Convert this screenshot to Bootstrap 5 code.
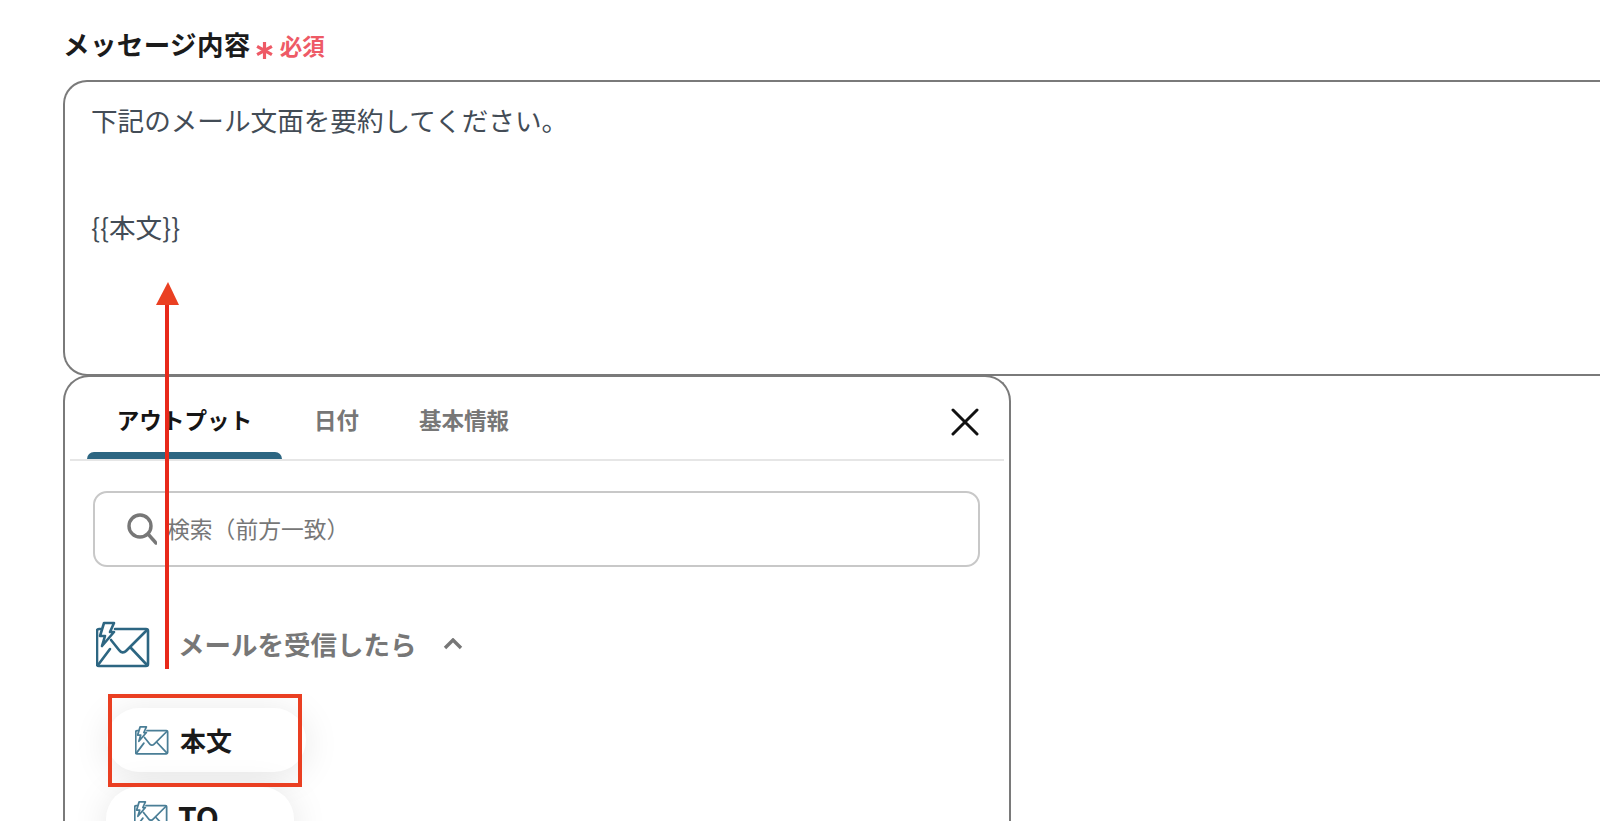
<!DOCTYPE html>
<html lang="ja">
<head>
<meta charset="utf-8">
<title>メッセージ内容</title>
<link href="https://cdn.jsdelivr.net/npm/bootstrap@5.3.0/dist/css/bootstrap.min.css" rel="stylesheet">
<style>
html,body{height:821px;overflow:hidden;background:#fff}
body{font-family:"Noto Sans CJK JP","Noto Sans",sans-serif;position:relative}
.page-wrap{padding:23px 0 0 63px;height:821px;overflow:hidden}
.field-label{font-size:26.5px;line-height:42px;font-weight:700;color:#1b1b1b;height:57px;letter-spacing:.4px;white-space:nowrap}
.req-mark{color:#ee5a66;font-size:22.500px;font-weight:700;letter-spacing:0}
.req-star{display:inline-block;width:19px;height:19px;margin:0 6px 0 4px;vertical-align:-5px}
.msg-box{height:296px;border:2px solid #7a7a7a;border-right:0;border-radius:24px 0 0 24px;padding:11px 26px 10px;color:#434c56;font-size:26.6px;line-height:53.5px}
.msg-box div{height:53.5px;white-space:nowrap}
.picker{width:948px;height:447px;margin-top:-1px;border:2px solid #7a7a7a;border-bottom:0;border-radius:26px 26px 0 0;padding:0 5px;background:#fff}
.tab-row{height:84px;border-bottom:2px solid #e6e6e6;padding-left:17px}
.tab-item{font-size:22.5px;font-weight:700;color:#777;line-height:30px;padding-top:27px;height:82px;white-space:nowrap}
.tab-on{width:195px;color:#151515;text-align:center;position:relative;margin-right:32px;letter-spacing:.1px}
.tab-on::after{content:"";position:absolute;left:0;right:0;bottom:0;height:7px;background:#2d6682;border-radius:7px 7px 0 0}
.tab-mid{width:105px}
.close-x{margin:31px 25px 0 auto;align-self:flex-start}
.search-box{margin:30px 24px 0 23px;height:76px;border:2px solid #c8c8c8;border-radius:14px;padding-left:32px;gap:10px;color:#777;font-size:22.8px}
.group-head{margin:52px 0 0 26px;height:50px;color:#777;font-size:26.5px;font-weight:700;white-space:nowrap}
.group-head svg.env{margin-right:28px}
.group-head svg.chev{margin-left:26px}
.pill-list{margin:23px 0 0 0;height:130px;overflow:hidden;padding:16px 40px 0 30px}
.out-pill{height:64px;border-radius:32px;background:#fff;box-shadow:0 4px 36px rgba(0,0,0,.1);padding-left:28px;gap:11px;font-size:26px;font-weight:700;color:#1a1a1a}
.pill-a{width:199px;margin-left:7px}
.pill-a span{margin-top:-2px}
.pill-b{width:188px;margin:15px 0 0 6px;align-items:flex-start;padding-top:7px;height:70px;gap:10px;font-size:30px;line-height:44px}
.pill-b svg{margin-top:6px}
.overlay-art{position:absolute;left:0;top:0;pointer-events:none}
</style>
</head>
<body>
<div class="page-wrap">
  <svg width="0" height="0" class="position-absolute"><defs>
    <g id="mail-bolt" fill="none" stroke-linejoin="round" stroke-linecap="round">
      <path d="M5 9H3a2 2 0 0 0-2 2v33a2 2 0 0 0 2 2h47a2 2 0 0 0 2-2V11a2 2 0 0 0-2-2H19"/>
      <path d="M15 20l8 10c2 3 5 3 7 1L51 10"/>
      <path d="M2 45l12-16M51 45L35 28"/>
      <path d="M8 3h10l-4 9h4L6 26l3-10H4z"/>
    </g>
  </defs></svg>
  <div class="field-label">メッセージ内容<span class="req-mark"><svg class="req-star" viewBox="0 0 18 18"><path d="M9 1v16M2 5l14 8M16 5L2 13" stroke="#ee5a66" stroke-width="3" fill="none"/></svg>必須</span></div>
  <div class="msg-box">
    <div>下記のメール文面を要約してください。</div>
    <div></div>
    <div>{{本文}}</div>
  </div>
  <div class="picker">
    <div class="tab-row d-flex">
      <div class="tab-item tab-on">アウトプット</div>
      <div class="tab-item tab-mid">日付</div>
      <div class="tab-item">基本情報</div>
      <svg class="close-x" width="28" height="28" viewBox="0 0 28 28"><path d="M2 2l24 24M26 2L2 26" stroke="#111" stroke-width="3" stroke-linecap="round"/></svg>
    </div>
    <div class="search-box d-flex align-items-center">
      <svg width="30" height="32" viewBox="0 0 30 32"><circle cx="13" cy="13" r="11" fill="none" stroke="#777" stroke-width="3.4"/><path d="M21 21l8 9" stroke="#777" stroke-width="3.4" stroke-linecap="round"/></svg>
      <span>検索（前方一致）</span>
    </div>
    <div class="group-head d-flex align-items-center">
      <svg class="env" width="54" height="48" viewBox="0 0 54 48" stroke="#2d6682" stroke-width="2.600"><use href="#mail-bolt"/></svg>
      <span>メールを受信したら</span>
      <svg class="chev" width="20" height="12" viewBox="0 0 20 12"><path d="M2 10l8-8 8 8" fill="none" stroke="#777" stroke-width="3.4"/></svg>
    </div>
    <div class="pill-list">
      <div class="out-pill pill-a d-flex align-items-center">
        <svg width="34" height="30" viewBox="0 0 54 48" stroke="#4a7e96" stroke-width="2.800"><use href="#mail-bolt"/></svg>
        <span>本文</span>
      </div>
      <div class="out-pill pill-b d-flex">
        <svg width="34" height="30" viewBox="0 0 54 48" stroke="#4a7e96" stroke-width="2.800"><use href="#mail-bolt"/></svg>
        <span>TO</span>
      </div>
    </div>
  </div>
</div>
<svg class="overlay-art" width="1600" height="821" viewBox="0 0 1600 821">
  <path d="M167 303V669" stroke="#e8291a" stroke-width="4" fill="none"/>
  <path d="M168 282l11 23h-23z" fill="#ea4022"/>
  <rect x="110" y="696" width="190" height="89" fill="none" stroke="#ea3f22" stroke-width="4"/>
</svg>
<script src="https://cdn.jsdelivr.net/npm/bootstrap@5.3.0/dist/js/bootstrap.bundle.min.js"></script>
</body>
</html>
